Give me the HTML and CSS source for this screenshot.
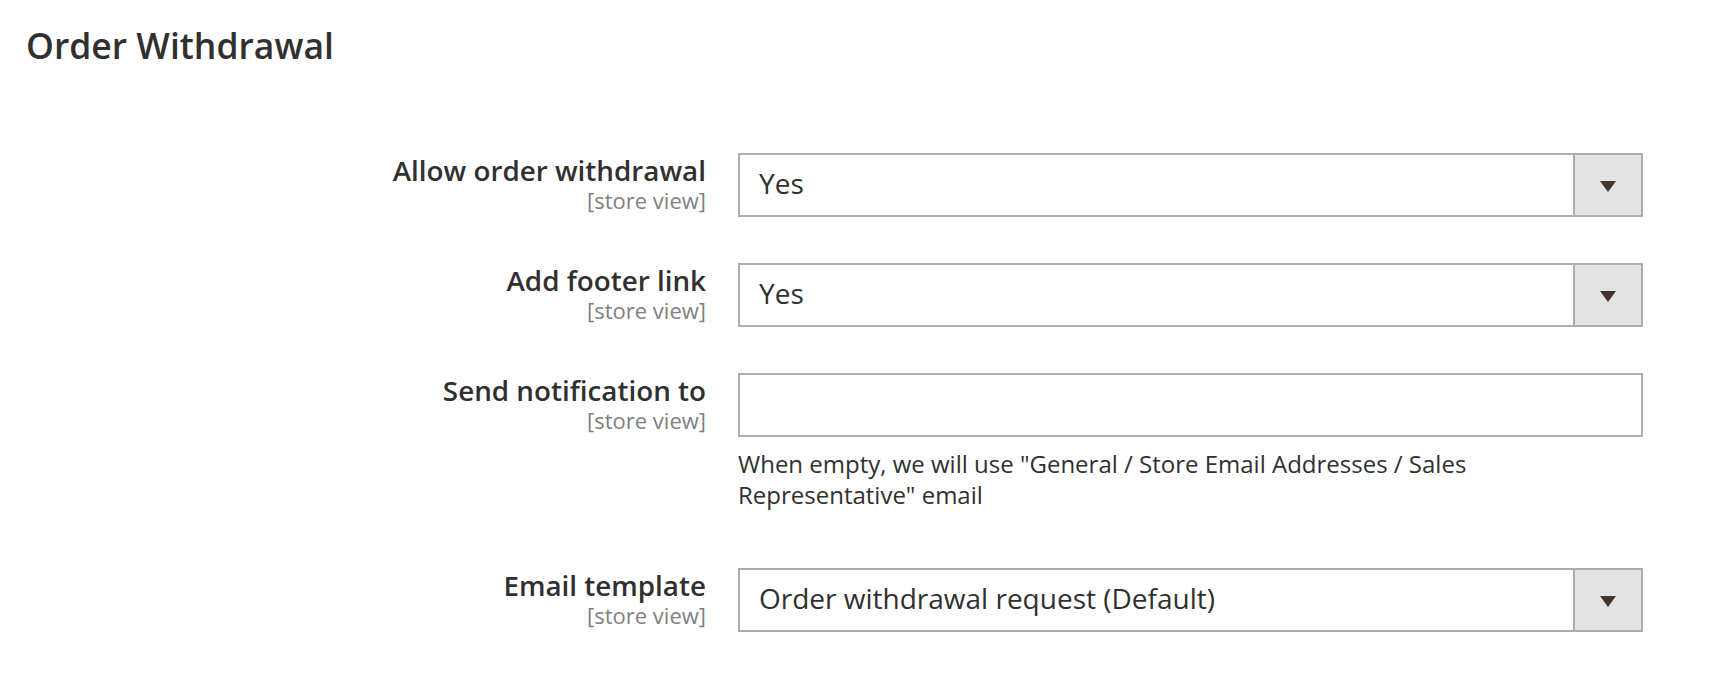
FILE: index.html
```html
<!DOCTYPE html>
<html lang="en">
<head>
<meta charset="utf-8">
<title>Order Withdrawal</title>
<link rel="stylesheet" href="styles.css">
</head>
<body>
<div class="page">
  <h2 class="title">Order Withdrawal</h2>
  <div class="fieldset">
    <div class="row">
      <div class="label"><span class="name">Allow order withdrawal</span><span class="scope">[store view]</span></div>
      <div class="control">
        <div class="select"><span class="value">Yes</span><span class="btn"><span class="arrow"></span></span></div>
      </div>
    </div>
    <div class="row">
      <div class="label"><span class="name">Add footer link</span><span class="scope">[store view]</span></div>
      <div class="control">
        <div class="select"><span class="value">Yes</span><span class="btn"><span class="arrow"></span></span></div>
      </div>
    </div>
    <div class="row">
      <div class="label"><span class="name">Send notification to</span><span class="scope">[store view]</span></div>
      <div class="control">
        <div class="input"></div>
        <p class="note">When empty, we will use "General / Store Email Addresses / Sales Representative" email</p>
      </div>
    </div>
    <div class="row">
      <div class="label"><span class="name">Email template</span><span class="scope">[store view]</span></div>
      <div class="control">
        <div class="select"><span class="value">Order withdrawal request (Default)</span><span class="btn"><span class="arrow"></span></span></div>
      </div>
    </div>
  </div>
</div>
</body>
</html>
```
FILE: styles.css
```css
html, body {
  margin: 0;
  padding: 0;
  background: #ffffff;
}
body {
  font-family: "Open Sans", "DejaVu Sans", sans-serif;
  color: #303030;
}
.page {
  padding: 25px 0 0 26px;
}
.title {
  margin: 0;
  font-size: 35.5px;
  font-weight: 600;
  line-height: 41px;
  color: #303030;
}
.fieldset {
  margin-top: 87px;
  display: flex;
  flex-direction: column;
  gap: 46px;
}
.row {
  display: grid;
  grid-template-columns: 680px 905px;
  column-gap: 32px;
  align-items: start;
}
.label {
  display: flex;
  flex-direction: column;
  align-items: flex-end;
  text-align: right;
}
.name {
  font-size: 27.8px;
  font-weight: 600;
  line-height: 34px;
  color: #303030;
}
.scope {
  font-size: 22px;
  line-height: 26px;
  color: #808080;
}
.select, .input {
  box-sizing: border-box;
  height: 64px;
  border: 2px solid #adadad;
  background: #ffffff;
}
.select {
  display: flex;
  align-items: stretch;
}
.value {
  flex: 1;
  display: flex;
  align-items: center;
  padding: 0 0 4px 19px;
  font-size: 28px;
  line-height: 34px;
  color: #303030;
}
.btn {
  width: 66px;
  background: #e3e3e3;
  border-left: 2px solid #adadad;
  display: flex;
  align-items: center;
  justify-content: center;
}
.arrow {
  width: 0;
  height: 0;
  border-style: solid;
  border-width: 11px 8px 0 8px;
  border-color: #41362f transparent transparent transparent;
  margin-top: 2px;
}
.note {
  margin: 11px 0 12px;
  font-size: 24px;
  line-height: 31px;
  color: #303030;
}
```
